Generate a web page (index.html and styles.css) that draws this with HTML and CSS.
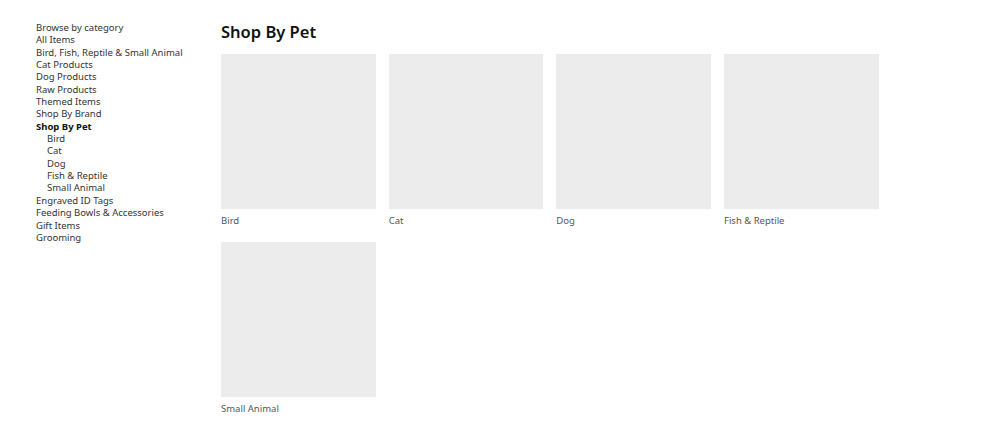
FILE: index.html
```html
<!DOCTYPE html>
<html>
<head>
<meta charset="utf-8">
<link rel="stylesheet" href="styles.css">
</head>
<body>
<div class="page">
  <aside class="sidebar">
    <ul class="cats">
      <li class="cat">Browse by category</li>
      <li class="cat">All Items</li>
      <li class="cat">Bird, Fish, Reptile &amp; Small Animal</li>
      <li class="cat">Cat Products</li>
      <li class="cat">Dog Products</li>
      <li class="cat">Raw Products</li>
      <li class="cat">Themed Items</li>
      <li class="cat">Shop By Brand</li>
      <li class="cat active">Shop By Pet</li>
      <li class="cat sub">Bird</li>
      <li class="cat sub">Cat</li>
      <li class="cat sub">Dog</li>
      <li class="cat sub">Fish &amp; Reptile</li>
      <li class="cat sub">Small Animal</li>
      <li class="cat">Engraved ID Tags</li>
      <li class="cat">Feeding Bowls &amp; Accessories</li>
      <li class="cat">Gift Items</li>
      <li class="cat">Grooming</li>
    </ul>
  </aside>
  <main class="main">
    <h1 class="title">Shop By Pet</h1>
    <div class="grid">
      <div class="card"><div class="thumb"></div><div class="label">Bird</div></div>
      <div class="card"><div class="thumb"></div><div class="label">Cat</div></div>
      <div class="card"><div class="thumb"></div><div class="label">Dog</div></div>
      <div class="card"><div class="thumb"></div><div class="label">Fish &amp; Reptile</div></div>
      <div class="card"><div class="thumb"></div><div class="label">Small Animal</div></div>
    </div>
  </main>
</div>
</body>
</html>
```
FILE: styles.css
```css
html, body {
  margin: 0;
  padding: 0;
  background: #fff;
}
body {
  font-family: "Noto Sans", "Open Sans", sans-serif;
  color: #333;
}
.page {
  display: flex;
  padding: 21px 0 0 36px;
}
.sidebar {
  width: 185px;
  flex: none;
  padding-top: 1px;
}
.cats {
  list-style: none;
  margin: 0;
  padding: 0;
}
.cat {
  font-size: 9.5px;
  line-height: 12.35px;
  color: #333;
}
.cat.active {
  font-weight: 700;
  color: #111;
}
.cat.sub {
  padding-left: 11px;
}
.main {
  flex: 1;
}
.title {
  margin: 0 0 12px 0;
  font-size: 16.5px;
  line-height: 21px;
  font-weight: 600;
  color: #111;
}
.grid {
  display: grid;
  grid-template-columns: repeat(4, 154.67px);
  column-gap: 13px;
}
.card {
  height: 188px;
}
.thumb {
  width: 100%;
  height: 155px;
  background: #ececec;
}
.label {
  margin-top: 6px;
  font-size: 9.5px;
  line-height: 12px;
  color: #555;
}
```
